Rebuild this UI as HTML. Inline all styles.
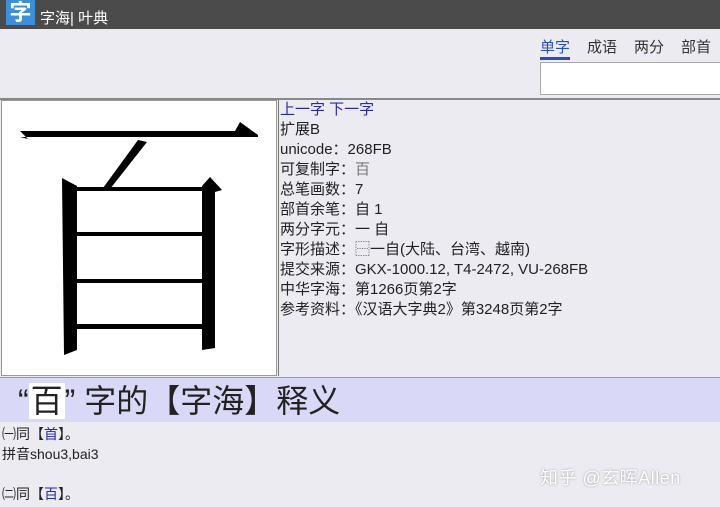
<!DOCTYPE html>
<html><head><meta charset="utf-8"><style>
body{margin:0;width:720px;height:507px;overflow:hidden;background:#ecebf1;font-family:"Liberation Sans","Noto Sans CJK SC",sans-serif;position:relative}
.hdr{position:absolute;left:0;top:0;width:720px;height:29px;background:#4b4b4b}
.logo{position:absolute;left:6px;top:0;width:29px;height:25px;background:#3f8fd8;color:#fff;font-size:22px;line-height:25px;text-align:center;font-weight:bold}
.title{position:absolute;left:40px;top:10px;color:#fff;font-size:15px;line-height:18px}
.tabs{position:absolute;top:36px;left:540px;font-size:15px;color:#333;white-space:nowrap}
.tabs span{margin-right:17px}
.tabs .on{color:#2c4fb5;border-bottom:3px solid #2c4fb5;padding-bottom:1px}
.search{position:absolute;left:540px;top:62px;width:182px;height:33px;background:#fff;border:1px solid #aaa;box-sizing:border-box}
.line1{position:absolute;left:0;top:98px;width:720px;height:2px;background:#888}
.glyph{position:absolute;left:1px;top:100px;width:276px;height:276px;background:#fff;border:1px solid #999;box-sizing:border-box}
.info{position:absolute;left:278px;top:100px;border-left:1px solid #777;height:276px;padding-left:1px;font-size:15px;line-height:20px;color:#222;width:440px;white-space:nowrap}
.info .lnk{color:#2a2aa8}
.band{position:absolute;left:0;top:377px;width:720px;height:44px;background:#d9d9f7;border-top:1px solid #999}
.band div{position:absolute;left:18px;top:3px;font-size:32px;line-height:40px;color:#222;white-space:nowrap}
.band b{font-weight:normal;background:#fff;padding:0 2px}
.body{position:absolute;left:2px;top:424px;font-size:14px;line-height:20px;color:#222}
.body .l{color:#2a2aa8}
.wm{position:absolute;left:540px;top:464px;font-size:18px;letter-spacing:0.5px;color:#fff;text-shadow:0 0 2px #999}
</style></head><body>
<div class="hdr"><div class="logo">字</div><div class="title">字海| 叶典</div></div>
<div class="tabs"><span class="on">单字</span><span>成语</span><span>两分</span><span>部首</span></div>
<div class="search"></div>
<div class="line1"></div>
<div class="glyph"><svg width="276" height="276" viewBox="1 100 276 276" style="position:absolute;left:-1px;top:-1px">
<polygon points="20,131 235,131 240,122 258,135 258,137 20,137 28,139" fill="#000"/>
<polygon points="138,140 147,142 110,189 103,188" fill="#000"/>
<polygon points="62,178 77,186 77,350 64,355" fill="#000"/>
<polygon points="202,186 210,177 222,190 215,192 215,348 202,350" fill="#000"/>
<rect x="75" y="187" width="130" height="4" fill="#000"/>
<rect x="75" y="232" width="130" height="4" fill="#000"/>
<rect x="75" y="279" width="130" height="4" fill="#000"/>
<rect x="75" y="324" width="130" height="5" fill="#000"/>
</svg></div>
<div class="info">
<div class="lnk">上一字 下一字</div>
<div>扩展B</div>
<div>unicode：268FB</div>
<div>可复制字：<span style="color:#777">百</span></div>
<div>总笔画数：7</div>
<div>部首余笔：自 1</div>
<div>两分字元：一 自</div>
<div>字形描述：⿱一自(大陆、台湾、越南)</div>
<div>提交来源：GKX-1000.12, T4-2472, VU-268FB</div>
<div>中华字海：第1266页第2字</div>
<div>参考资料：《汉语大字典2》第3248页第2字</div>
</div>
<div class="band"><div>“<b>百</b>” 字的【字海】释义</div></div>
<div class="body">
<div>㈠同【<span class="l">首</span>】。</div>
<div>拼音shou3,bai3</div>
<div>&nbsp;</div>
<div>㈡同【<span class="l">百</span>】。</div>
</div>
<div class="wm">知乎 @玄晖Allen</div>
</body></html>
